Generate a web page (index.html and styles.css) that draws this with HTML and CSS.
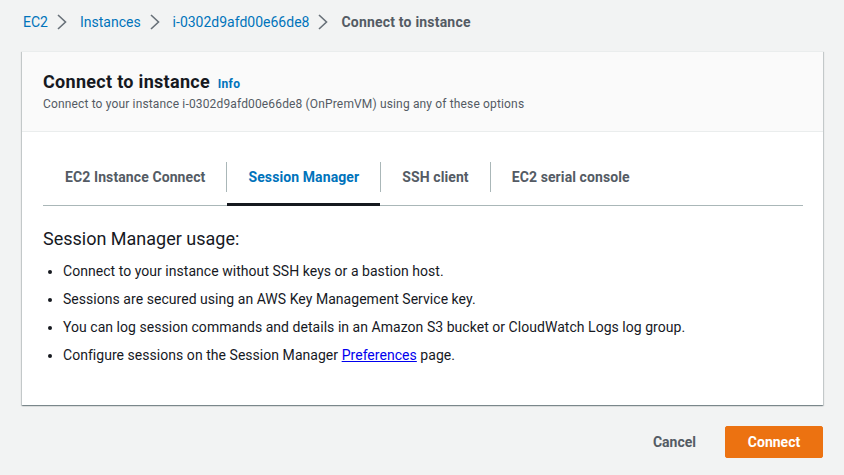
FILE: index.html
```html
<!DOCTYPE html>
<html>
<head>
<meta charset="utf-8">
<link rel="stylesheet" href="styles.css">
</head>
<body>
<nav class="crumbs">
  <a href="#">EC2</a>
  <svg class="chev" viewBox="0 0 16 16"><path d="M4 1l7.5 7-7.5 7"/></svg>
  <a href="#">Instances</a>
  <svg class="chev" viewBox="0 0 16 16"><path d="M4 1l7.5 7-7.5 7"/></svg>
  <a href="#">i-0302d9afd00e66de8</a>
  <svg class="chev" viewBox="0 0 16 16"><path d="M4 1l7.5 7-7.5 7"/></svg>
  <span class="current">Connect to instance</span>
</nav>

<section class="card">
  <header class="card-head">
    <h1>Connect to instance <a class="info" href="#">Info</a></h1>
    <p>Connect to your instance i-0302d9afd00e66de8 (OnPremVM) using any of these options</p>
  </header>
  <div class="card-body">
    <ul class="tabs">
      <li class="tab"><span>EC2 Instance Connect</span></li>
      <li class="tab active"><span>Session Manager</span></li>
      <li class="tab"><span>SSH client</span></li>
      <li class="tab"><span>EC2 serial console</span></li>
    </ul>
    <h2>Session Manager usage:</h2>
    <ul class="bullets">
      <li>Connect to your instance without SSH keys or a bastion host.</li>
      <li>Sessions are secured using an AWS Key Management Service key.</li>
      <li>You can log session commands and details in an Amazon S3 bucket or CloudWatch Logs log group.</li>
      <li>Configure sessions on the Session Manager <a href="#" class="plain">Preferences</a> page.</li>
    </ul>
  </div>
</section>

<div class="actions">
  <button class="btn-link">Cancel</button>
  <button class="btn-primary">Connect</button>
</div>
</body>
</html>
```

FILE: styles.css
```css
* { box-sizing: border-box; }
html, body { margin: 0; padding: 0; }
body {
  background: #f2f3f3;
  font-family: Roboto, "Liberation Sans", Arial, sans-serif;
  color: #16191f;
  font-size: 14px;
  line-height: 20px;
  padding: 12px 21px 0 22px;
}
.crumbs {
  display: flex;
  align-items: center;
  height: 20px;
  padding-left: 1px;
}
.crumbs a { color: #0073bb; text-decoration: none; }
.crumbs .current { color: #545b64; font-weight: 700; letter-spacing: 0.2px; }
.chev { width: 16px; height: 16px; margin: 0 10px 0 6px; }
.chev path { fill: none; stroke: #687078; stroke-width: 1.6; }

.card {
  margin-top: 19px;
  background: #fff;
  box-shadow: 0 1px 1px 0 rgba(0,28,36,.3), 1px 1px 1px 0 rgba(0,28,36,.15), -1px 1px 1px 0 rgba(0,28,36,.15);
  border-top: 1px solid #eaeded;
}
.card-head {
  background: #fafafa;
  border-bottom: 1px solid #eaeded;
  padding: 19px 20px 19px 21px;
}
.card-head h1 {
  margin: 0;
  font-size: 18px;
  line-height: 22px;
  font-weight: 700;
  letter-spacing: 0.3px;
}
.info {
  font-size: 12px;
  font-weight: 700;
  color: #0073bb;
  text-decoration: none;
  margin-left: 3px;
  letter-spacing: 0.3px;
}
.card-head p {
  margin: 1px 0 0;
  font-size: 12px;
  line-height: 16px;
  color: #545b64;
  letter-spacing: 0.15px;
}
.card-body {
  padding: 17px 20px 40px 21px;
}
.tabs {
  display: flex;
  list-style: none;
  margin: 0;
  padding: 0;
  border-bottom: 1px solid #aab7b8;
}
.tab {
  position: relative;
  padding: 13px 0;
  font-weight: 700;
  color: #545b64;
  letter-spacing: 0.1px;
}
.tab span {
  display: block;
  padding: 5px 21px;
  border-left: 1px solid #aab7b8;
}
.tab:first-child span { border-left: none; padding-left: 22px; }
.tab.active { color: #0073bb; }
.tab.active::after {
  content: "";
  position: absolute;
  left: 1px;
  right: 0;
  bottom: -1px;
  height: 3px;
  background: #16191f;
}
h2 {
  margin: 21px 0 0;
  font-size: 18px;
  line-height: 24px;
  font-weight: 400;
}
.bullets {
  margin: 10px 0 0;
  padding-left: 20px;
}
.bullets li {
  line-height: 20px;
  margin-top: 8px;
  letter-spacing: 0.04px;
}
.bullets li:first-child { margin-top: 0; }
.plain { color: #0000ee; text-decoration: underline; }

.actions {
  display: flex;
  justify-content: flex-end;
  align-items: center;
  gap: 29px;
  margin-top: 20px;
}
.btn-link {
  background: none;
  border: none;
  font: inherit;
  font-weight: 700;
  color: #545b64;
  padding: 0;
}
.btn-primary {
  font: inherit;
  font-weight: 700;
  background: #ec7211;
  color: #fff;
  border: 1px solid #ec7211;
  border-radius: 2px;
  width: 98px;
  height: 32px;
  padding: 0;
  margin-top: 1px;
}
```
